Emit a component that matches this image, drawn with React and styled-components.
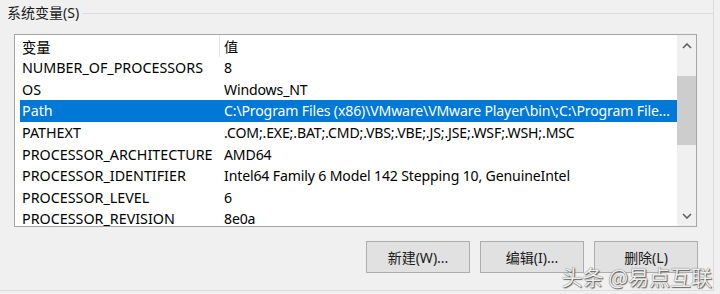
import React from "react";
import styled, { createGlobalStyle } from "styled-components";

const GlobalStyle = createGlobalStyle`
  html, body {
    margin: 0;
    padding: 0;
    background: #f0f0f0;
  }
  body {
    font-family: "Noto Sans", "Noto Sans CJK SC", sans-serif;
    color: #000;
  }
`;

const rows = [
  ["NUMBER_OF_PROCESSORS", "8"],
  ["OS", "Windows_NT"],
  ["Path", "C:\\Program Files (x86)\\VMware\\VMware Player\\bin\\;C:\\Program Files\\Common Files\\Oracle\\Java\\javapath"],
  ["PATHEXT", ".COM;.EXE;.BAT;.CMD;.VBS;.VBE;.JS;.JSE;.WSF;.WSH;.MSC"],
  ["PROCESSOR_ARCHITECTURE", "AMD64"],
  ["PROCESSOR_IDENTIFIER", "Intel64 Family 6 Model 142 Stepping 10, GenuineIntel"],
  ["PROCESSOR_LEVEL", "6"],
  ["PROCESSOR_REVISION", "8e0a"],
];

export default function App() {
  return (
    <>
      <GlobalStyle />
      <Page>
        <Group>
          <TitleRow>
            <Title>系统变量(S)</Title>
            <TitleLine />
          </TitleRow>

          <ListBox>
            <Table>
              <HeaderRow>
                <NameCell>变量</NameCell>
                <Divider />
                <ValueCell>值</ValueCell>
              </HeaderRow>
              {rows.map(([name, value]) => (
                <Row key={name} selected={name === "Path"}>
                  <NameCell>{name}</NameCell>
                  <ValueCell>{value}</ValueCell>
                </Row>
              ))}
            </Table>
            <ScrollBar>
              <Arrow>
                <svg width="10" height="6" viewBox="0 0 10 6">
                  <path d="M1 5 L5 1 L9 5" fill="none" stroke="#606060" strokeWidth="1.6" />
                </svg>
              </Arrow>
              <Track>
                <Thumb />
              </Track>
              <Arrow>
                <svg width="10" height="6" viewBox="0 0 10 6">
                  <path d="M1 1 L5 5 L9 1" fill="none" stroke="#606060" strokeWidth="1.6" />
                </svg>
              </Arrow>
            </ScrollBar>
          </ListBox>

          <ButtonRow>
            <Button>新建(W)...</Button>
            <Button>编辑(I)...</Button>
            <Button>删除(L)</Button>
          </ButtonRow>
        </Group>
        <Watermark>头条 @易点互联</Watermark>
      </Page>
    </>
  );
}

const Page = styled.div`
  position: relative;
  width: 720px;
  height: 294px;
  overflow: hidden;
`;

const Group = styled.div`
  width: 713px;
  height: 290px;
  border-right: 1px solid #dcdcdc;
  border-bottom: 1px solid #dcdcdc;
  display: flex;
  flex-direction: column;
`;

const TitleRow = styled.div`
  display: flex;
  align-items: center;
  height: 26px;
  padding-left: 7px;
`;

const Title = styled.span`
  font-size: 14px;
  line-height: 26px;
  color: #1a1a1a;
`;

const TitleLine = styled.div`
  flex: 1;
  border-top: 1px solid #dcdcdc;
  margin-left: 4px;
`;

const ListBox = styled.div`
  margin: 8px 0 0 14px;
  width: 681px;
  height: 191px;
  border: 1px solid #a5a5a5;
  background: #fff;
  display: flex;
  overflow: hidden;
`;

const Table = styled.div`
  flex: 1;
  padding-left: 5px;
  overflow: hidden;
`;

const HeaderRow = styled.div`
  position: relative;
  display: grid;
  grid-template-columns: 204px 1fr;
  height: 22px;
  align-items: center;
`;

const Divider = styled.div`
  position: absolute;
  left: 199px;
  top: 0;
  bottom: 0;
  border-left: 1px solid #e5e5e5;
`;

const Row = styled.div`
  display: grid;
  grid-template-columns: 204px 1fr;
  height: 21.6px;
  align-items: center;
  background: ${(p) => (p.selected ? "#0078d7" : "transparent")};
  color: ${(p) => (p.selected ? "#fff" : "#000")};
`;

const NameCell = styled.div`
  font-size: 14.3px;
  padding-left: 2px;
  white-space: nowrap;
  overflow: hidden;
`;

const ValueCell = styled.div`
  font-size: 14.1px;
  letter-spacing: -0.15px;
  white-space: nowrap;
  overflow: hidden;
  text-overflow: ellipsis;
  padding-right: 4px;
`;

const ScrollBar = styled.div`
  width: 19px;
  background: #f0f0f0;
  display: flex;
  flex-direction: column;
`;

const Arrow = styled.div`
  height: 21px;
  display: flex;
  align-items: center;
  justify-content: center;
`;

const Track = styled.div`
  flex: 1;
  padding-top: 20px;
`;

const Thumb = styled.div`
  height: 69px;
  background: #cdcdcd;
`;

const ButtonRow = styled.div`
  display: flex;
  justify-content: flex-end;
  gap: 10px;
  padding-right: 15px;
  margin-top: 14px;
`;

const Button = styled.div`
  width: 102px;
  height: 30px;
  border: 1px solid #adadad;
  background: #e1e1e1;
  display: flex;
  align-items: center;
  justify-content: center;
  font-size: 14px;
  color: #1a1a1a;
`;

const Watermark = styled.div`
  position: absolute;
  right: 8px;
  bottom: 3px;
  font-size: 21px;
  color: rgba(255, 255, 255, 0.92);
  text-shadow: 0 0 1px #444, 1px 1px 1px #666;
  font-family: "Noto Sans CJK SC", sans-serif;
`;
